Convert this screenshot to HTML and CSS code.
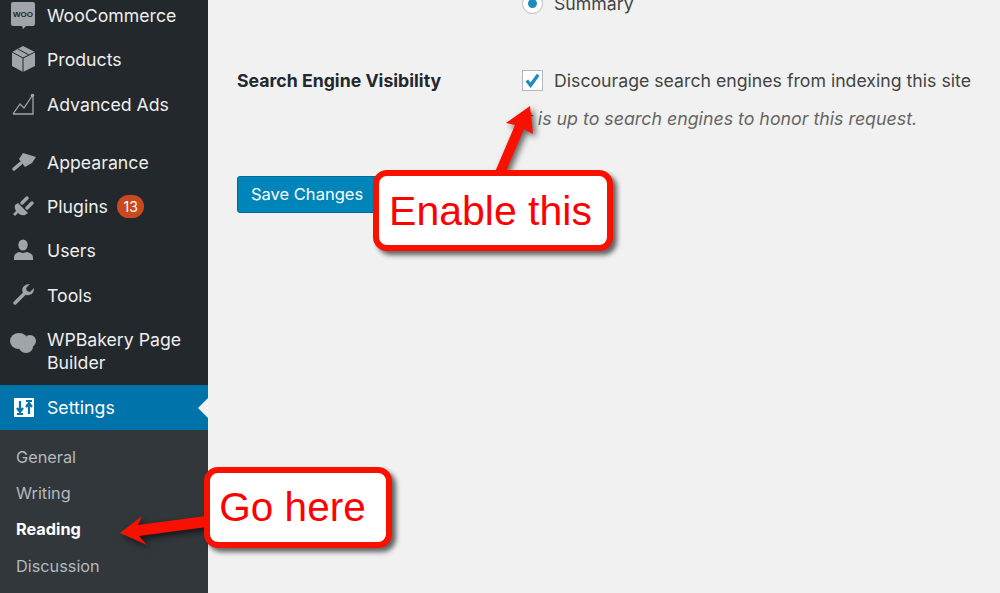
FILE: index.html
```html
<!DOCTYPE html>
<html lang="en">
<head>
<meta charset="UTF-8">
<meta name="viewport" content="width=device-width, initial-scale=1.0">
<title>Reading Settings</title>
<link rel="stylesheet" href="styles.css">
</head>
<body>
    <div class="page">
        <div class="sidebar">
            <ul class="menu">
                <li class="menu-item">
                    <svg class="icon" viewBox="0 0 26 26"><path d="M3 0h20q2 0 2 2v20q0 2-2 2h-7l-3 3-1-3H3q-2 0-2-2V2q0-2 2-2z"/><text x="13" y="15" class="woo-text" text-anchor="middle">WOO</text></svg>
                    <span>WooCommerce</span>
                </li>
                <li class="menu-item">
                    <svg class="icon" viewBox="0 0 26 26"><path d="M13 0l12 6v14l-12 6-11-6V6z"/><path class="icon-cut" d="M2 6l11 6 12-6M13 12v14M8 3l11 6"/></svg>
                    <span>Products</span>
                </li>
                <li class="menu-item">
                    <svg class="icon" viewBox="0 0 26 26"><path class="icon-line" d="M3 23h20V6M3 23l7-10 4 4 8-12"/><circle cx="22.500" cy="4.500" r="1.800"/></svg>
                    <span>Advanced Ads</span>
                </li>
                <li class="menu-item menu-gap">
                    <svg class="icon" viewBox="0 0 26 26"><path d="M13 4l13 4-4 6-7 4-6-8z"/><path class="icon-thick" d="M4 20l7-6"/></svg>
                    <span>Appearance</span>
                </li>
                <li class="menu-item">
                    <svg class="icon" viewBox="0 0 26 26"><path d="M8 10l10 10-3 2q-4 1-7-2l-3 3-2-2 3-3q-2-3-1-6z"/><path class="icon-thick" d="M12 10l5-5M17 15l5-5"/></svg>
                    <span>Plugins</span><span class="badge">13</span>
                </li>
                <li class="menu-item">
                    <svg class="icon" viewBox="0 0 26 26"><ellipse cx="13" cy="8" rx="4.700" ry="5.500"/><path d="M4 23v-3q0-3 5-5l4 1 4-1q6 2 6 5v3z"/></svg>
                    <span>Users</span>
                </li>
                <li class="menu-item">
                    <svg class="icon" viewBox="0 0 26 26"><path class="icon-thick" d="M5 21l10-10"/><path d="M24 6q0 6-5 7-4 1-6-2-2-4 1-7 2-2 6-2l-4 4 1 3 3 1z"/></svg>
                    <span>Tools</span>
                </li>
                <li class="menu-item">
                    <svg class="icon icon-bake" viewBox="0 0 26 26"><ellipse cx="9" cy="8" rx="9" ry="8"/><ellipse cx="20" cy="8" rx="6" ry="6"/><ellipse cx="16" cy="14" rx="7" ry="6"/></svg>
                    <span>WPBakery Page<br>Builder</span>
                </li>
                <li class="menu-item current">
                    <svg class="icon" viewBox="0 0 26 26"><rect class="icon-white" x="4" y="4" width="20" height="19"/><path class="icon-sliders" d="M10 7v10M7 14l3 4 3-4M7 20h6M19 10v10M16 13l3-4 3 4M16 7h6"/></svg>
                    <span>Settings</span>
                </li>
            </ul>
            <ul class="submenu">
                <li>General</li>
                <li>Writing</li>
                <li class="active">Reading</li>
                <li>Discussion</li>
            </ul>
        </div>

        <div class="content">
            <div class="form-row top-row">
                <div></div>
                <div class="option"><span class="radio"></span>Summary</div>
            </div>
            <div class="form-row">
                <div class="label">Search Engine Visibility</div>
                <div>
                    <div class="option">
                        <span class="checkbox">
                            <svg viewBox="0 0 20 20"><path d="M4 10l4 5 8-11" /></svg>
                        </span>
                        Discourage search engines from indexing this site
                    </div>
                    <p class="description">It is up to search engines to honor this request.</p>
                </div>
            </div>
            <button class="btn">Save Changes</button>
        </div>
    </div>

    <svg class="arrows" viewBox="0 0 1000 593">
        <path d="M530 106L506 123 515 125 495 172 504 176 524 129 533 134z"/>
        <path d="M120 533L142 516 138 525 206 516 207 527 139 536 147 545z"/>
    </svg>
    <div class="callout callout-enable">Enable this</div>
    <div class="callout callout-go">Go here</div>
</body>
</html>
```

FILE: styles.css
```css
* {
    box-sizing: border-box;
}
body {
    margin: 0;
    height: 593px;
    overflow: hidden;
    background-color: #f1f1f1;
    font-family: Inter, "Liberation Sans", sans-serif;
}
ul {
    list-style: none;
    margin: 0;
    padding: 0;
}
.page {
    display: flex;
    height: 593px;
}
.sidebar {
    width: 208px;
    flex-shrink: 0;
    background-color: #23282d;
    overflow: hidden;
}
.menu {
    margin-top: -7px;
}
.menu-item {
    display: flex;
    align-items: flex-start;
    position: relative;
    padding: 11px 0 10.300px 10px;
    font-size: 17.700px;
    line-height: 23px;
    color: #eee;
}
.menu-gap {
    margin-top: 14px;
}
.icon {
    width: 26px;
    height: 26px;
    margin: -2px 11px -3px 0;
    flex-shrink: 0;
    overflow: visible;
    fill: #a0a5aa;
}
.icon-cut {
    fill: none;
    stroke: #23282d;
    stroke-width: 1;
}
.icon-line {
    fill: none;
    stroke: #a0a5aa;
    stroke-width: 1.300;
}
.icon-thick {
    fill: none;
    stroke: #a0a5aa;
    stroke-width: 3.500;
    stroke-linecap: round;
}
.icon-bake {
    transform: translateY(7px);
}
.icon-white {
    fill: #fff;
}
.icon-sliders {
    fill: none;
    stroke: #0073aa;
    stroke-width: 2.200;
}
.woo-text {
    font-family: "Liberation Sans", sans-serif;
    font-size: 8px;
    font-weight: bold;
    fill: #23282d;
}
.badge {
    margin-left: 9px;
    padding: 0 6.500px;
    height: 23px;
    border-radius: 12px;
    background-color: #ca4a1f;
    color: #fff;
    font-size: 14px;
    line-height: 23px;
}
.current {
    margin-top: 1px;
    background-color: #0073aa;
    color: #fff;
}
.current::after {
    content: "";
    position: absolute;
    right: 0;
    top: 50%;
    margin-top: -10px;
    border: 10px solid transparent;
    border-left-width: 0;
    border-right-color: #f1f1f1;
}
.submenu {
    background-color: #32373c;
    padding-top: 9px;
    height: 200px;
}
.submenu li {
    padding-left: 16px;
    font-size: 16.300px;
    line-height: 36.400px;
    color: #b4b9be;
}
.submenu .active {
    color: #fff;
    font-weight: bold;
}
.content {
    flex: 1;
    padding-left: 29px;
    color: #444;
    font-size: 17.700px;
}
.form-row {
    display: grid;
    grid-template-columns: 285px 1fr;
    align-items: start;
}
.top-row {
    margin-top: -8px;
    margin-bottom: 54px;
}
.label {
    font-weight: bold;
    color: #23282d;
    line-height: 23px;
}
.option {
    display: flex;
    align-items: center;
    line-height: 23px;
}
.radio {
    width: 21px;
    height: 21px;
    margin-right: 11px;
    border: 1px solid #b4b9be;
    border-radius: 50%;
    background-color: #fff;
    display: flex;
    align-items: center;
    justify-content: center;
}
.radio::before {
    content: "";
    width: 9px;
    height: 9px;
    border-radius: 50%;
    background-color: #1e8cbe;
}
.checkbox {
    width: 21px;
    height: 21px;
    margin-right: 11px;
    border: 1px solid #b4b9be;
    background-color: #fff;
    flex-shrink: 0;
}
.checkbox svg {
    display: block;
    fill: none;
    stroke: #1e8cbe;
    stroke-width: 3.500;
}
.description {
    margin: 15px 0 0;
    font-size: 17.800px;
    font-style: italic;
    color: #666;
    line-height: 23px;
}
.btn {
    display: block;
    margin-top: 46px;
    width: 150px;
    height: 37px;
    padding: 0 0 1px 13px;
    border: 1px solid #006799;
    border-radius: 3px;
    background-color: #0085ba;
    color: #fff;
    font-family: inherit;
    font-size: 16.500px;
    text-align: left;
}
.arrows {
    position: absolute;
    left: 0;
    top: 0;
    width: 1000px;
    height: 593px;
    fill: #f91100;
    filter: drop-shadow(3px 3px 3px rgba(0, 0, 0, 0.6));
}
.callout {
    position: absolute;
    display: flex;
    align-items: center;
    justify-content: center;
    height: 81px;
    border: 6px solid #f91100;
    border-radius: 14px;
    background-color: #fff;
    box-shadow: 4px 4px 5px rgba(0, 0, 0, 0.6);
    color: #f00;
    font-family: "Liberation Sans", sans-serif;
    font-size: 41px;
}
.callout-enable {
    left: 373px;
    top: 170px;
    width: 240px;
    padding: 2px 5px 0 0;
}
.callout-go {
    left: 204px;
    top: 467px;
    width: 188px;
    padding-right: 11px;
    font-size: 40.500px;
}
```
